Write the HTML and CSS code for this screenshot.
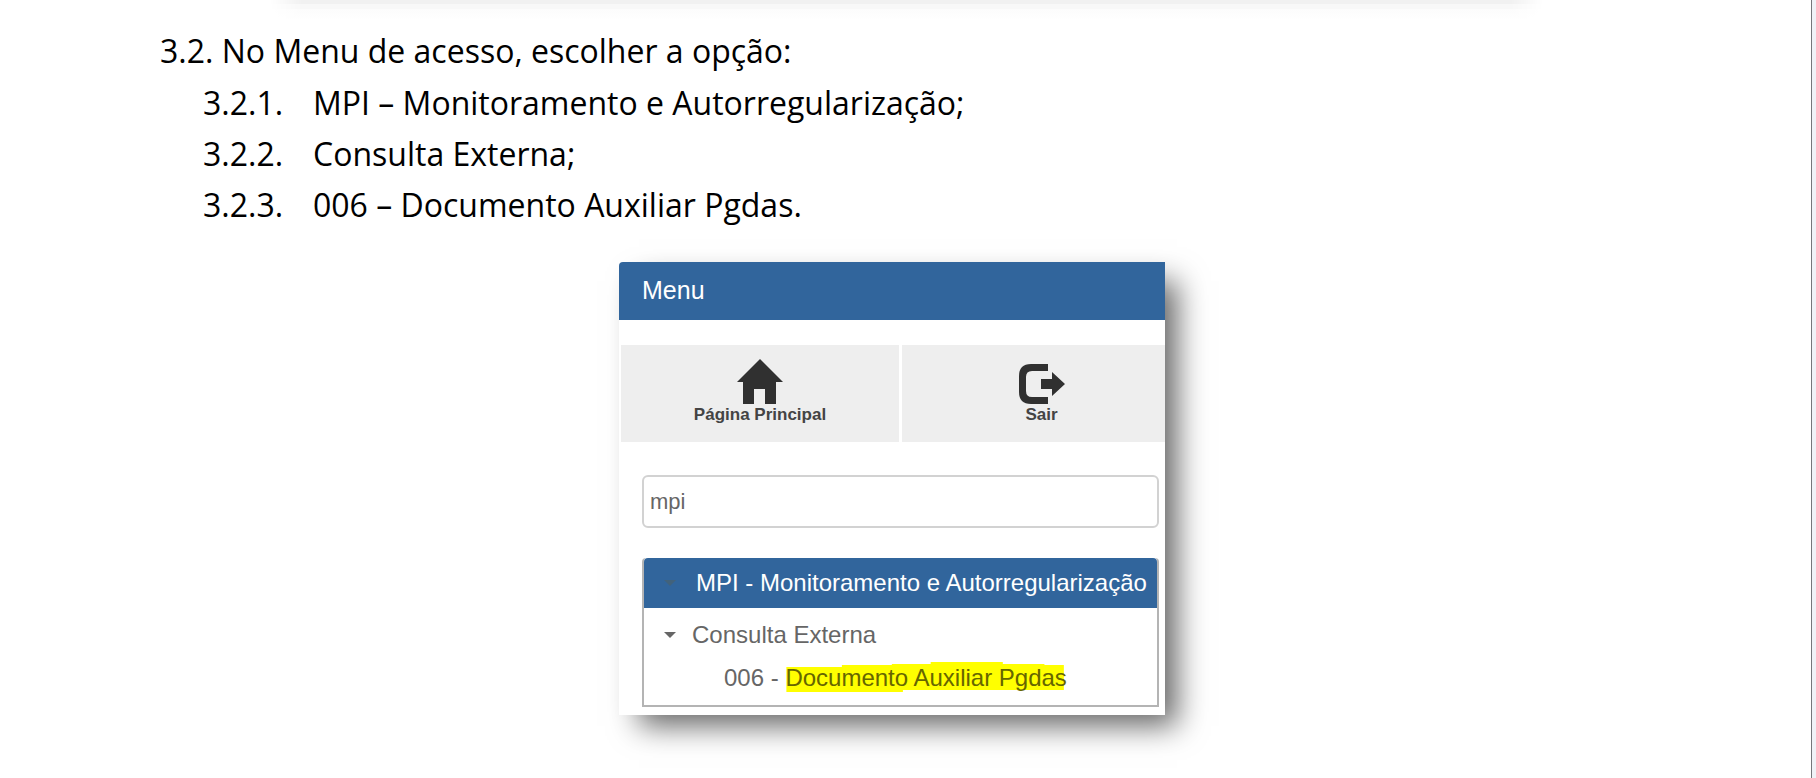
FILE: index.html
```html
<!DOCTYPE html>
<html lang="pt-BR">

<head>
     <meta charset="utf-8">
     <title>Menu de acesso</title>
     <link rel="stylesheet" href="styles.css">
</head>

<body>
     <main class="paper">
          <div class="figure-shadow"></div>

          <section class="steps">
               <p class="step">3.2. No Menu de acesso, escolher a opção:</p>
               <div class="substep"><span class="number">3.2.1.</span><span>MPI – Monitoramento e Autorregularização;</span></div>
               <div class="substep"><span class="number">3.2.2.</span><span>Consulta Externa;</span></div>
               <div class="substep"><span class="number">3.2.3.</span><span>006 – Documento Auxiliar Pgdas.</span></div>
          </section>

          <section class="menu">
               <h1 class="menu-title">Menu</h1>

               <div class="shortcuts">
                    <button class="shortcut" type="button">
                         <svg class="icon" viewBox="0 0 46 46" aria-hidden="true">
                              <path fill="#303030" d="M23 0 46 23H39V45H28V30H17V45H6V23H0Z" />
                         </svg>
                         Página Principal
                    </button>
                    <button class="shortcut" type="button">
                         <svg class="icon" viewBox="0 0 46 46" aria-hidden="true">
                              <path fill="#303030" d="M29 5H12Q0 5 0 17V33Q0 45 12 45H29V38H13Q7 38 7 32V18Q7 12 13 12H29ZM33 13 46 25 33 37V30H22V20H33Z" />
                         </svg>
                         Sair
                    </button>
               </div>

               <div class="menu-body">
                    <input class="search" type="text" value="mpi" aria-label="Pesquisar no menu">

                    <div class="tree">
                         <button class="tree-head" type="button"><span class="arrow"></span>MPI - Monitoramento e Autorregularização</button>
                         <button class="tree-group" type="button"><span class="arrow"></span>Consulta Externa</button>
                         <a class="tree-item" href="#">006 - <span class="marked">Documento Auxiliar Pgdas</span></a>
                    </div>
               </div>
          </section>
     </main>
</body>

</html>
```
FILE: styles.css
```css
* {
     box-sizing: border-box;
}

body {
     margin: 0;
     background-color: #f0f2f7;
     font-family: "Liberation Sans", Arial, sans-serif;
}

.paper {
     min-height: 100vh;
     margin-right: 4px;
     padding-bottom: 60px;
     background-color: #fff;
     border-right: 1px solid #75777b;
}

/* bottom edge of the figure above */
.figure-shadow {
     height: 20px;
     margin: 0 268px 0 270px;
     background: linear-gradient(#f1f1f1 4px, #f8f8f8 4px, #f8f8f8 9px, #fcfcfc 9px, #fdfdfd 14px, #fff 20px);
     -webkit-mask-image: linear-gradient(90deg, transparent, #000 32px, #000 calc(100% - 32px), transparent);
     mask-image: linear-gradient(90deg, transparent, #000 32px, #000 calc(100% - 32px), transparent);
}

.steps {
     padding: 5px 160px 0;
     font-family: "Open Sans", sans-serif;
     font-size: 32px;
     line-height: 51px;
     color: #000;
}

.step {
     margin: 0 0 1px;
}

.substep {
     display: flex;
     padding-left: 43px;
}

.number {
     width: 110px;
}

.menu {
     width: 546px;
     margin: 32px auto 0 619px;
     padding-bottom: 8px;
     background-color: #fff;
     border-top-left-radius: 4px;
     box-shadow: 16px 15px 28px -4px rgba(0, 0, 0, 0.6);
}

.menu-title {
     margin: 0;
     padding: 0 23px 2px;
     font-size: 25px;
     font-weight: normal;
     line-height: 56px;
     color: #fff;
     background-color: #31659c;
     border-top-left-radius: 4px;
}

.shortcuts {
     display: grid;
     grid-template-columns: 278fr 263fr;
     gap: 3px;
     padding: 25px 0 0 2px;
}

.shortcut {
     display: flex;
     flex-direction: column;
     align-items: center;
     padding: 14px 0 17px;
     border: none;
     background-color: #eee;
     font: bold 17px/20px "Liberation Sans", Arial, sans-serif;
     color: #444;
     cursor: pointer;
}

.shortcut:last-child {
     padding-left: 16px;
}

.icon {
     width: 46px;
     height: 46px;
}

.menu-body {
     padding: 33px 6px 0 23px;
}

.search {
     display: block;
     width: 100%;
     height: 53px;
     padding: 0 6px;
     border: 2px solid #d2d2d2;
     border-radius: 6px;
     font: 22px "Liberation Sans", Arial, sans-serif;
     color: #666;
}

.tree {
     margin-top: 30px;
     padding-bottom: 11px;
     border: 2px solid #b4b4b4;
     border-top: none;
     border-radius: 4px 4px 0 0;
     font-size: 24px;
}

.tree-head,
.tree-group {
     display: flex;
     align-items: center;
     width: 100%;
     border: none;
     background: none;
     font: inherit;
     color: #666;
     text-align: left;
     cursor: pointer;
}

.tree-head {
     gap: 20px;
     height: 50px;
     padding: 0 20px;
     background-color: #31659c;
     border-radius: 4px 4px 0 0;
     color: #fff;
     white-space: nowrap;
}

.tree-group {
     gap: 16px;
     height: 54px;
     padding: 0 20px;
}

.arrow {
     border: 6px solid transparent;
     border-top-color: #666;
     border-bottom: none;
}

.tree-head .arrow {
     border-top-color: #41627c;
}

.tree-item {
     display: block;
     padding-left: 80px;
     line-height: 32px;
     color: #666;
     text-decoration: none;
}

.marked {
     position: relative;
     z-index: 0;
     color: #660;
}

/* uneven marker stroke behind the text */
.marked::before {
     content: "";
     position: absolute;
     z-index: -1;
     inset: -2px 3px -2px 1px;
     background-color: #ff0;
     clip-path: polygon(0 5px, 20% 5px, 20% 3px, 38% 3px, 38% 2px, 52% 2px, 52% 0, 78% 0, 78% 2px, 93% 2px, 93% 3px, 100% 3px, 100% 28px, 42% 28px, 42% 30px, 0 30px);
}
```
